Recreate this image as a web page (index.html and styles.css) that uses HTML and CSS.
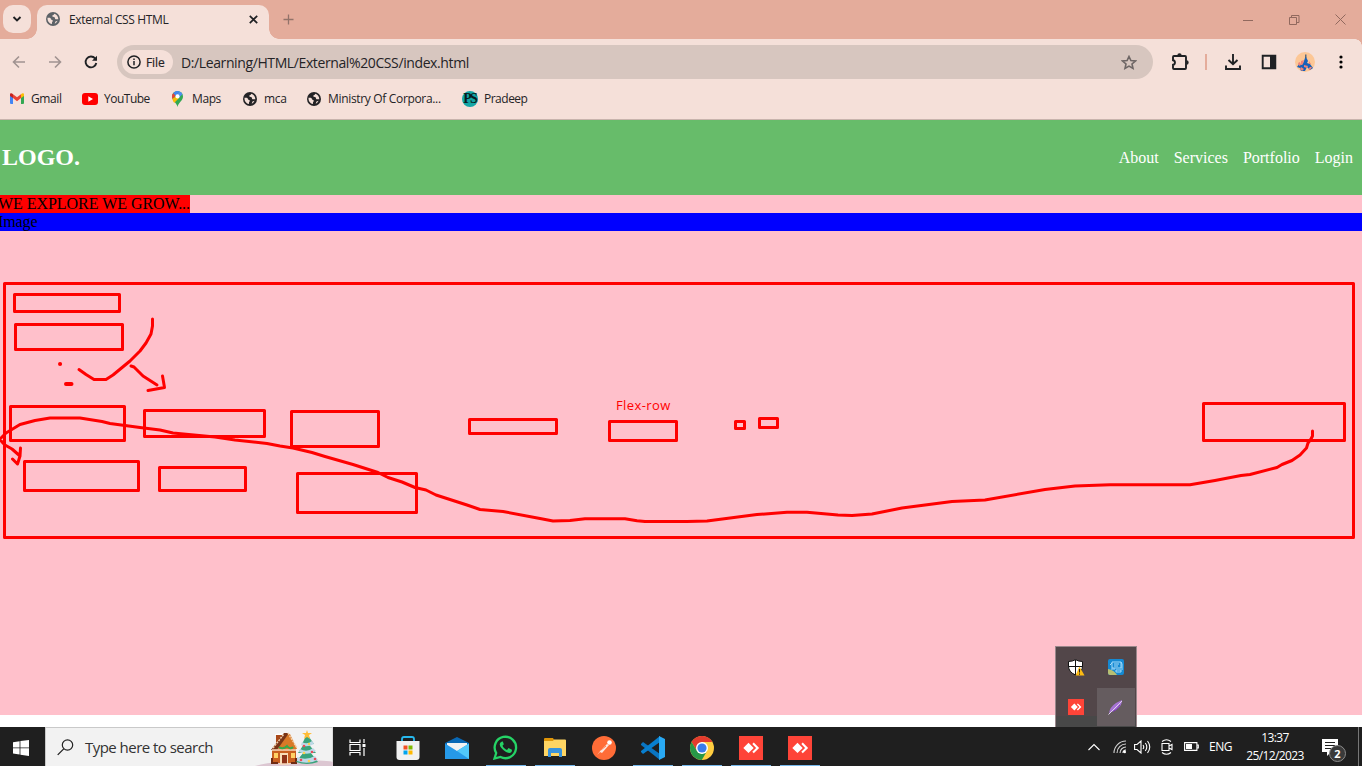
FILE: index.html
```html
<!DOCTYPE html>
<html lang="en">
<head>
<meta charset="utf-8">
<title>External CSS HTML</title>
<link rel="stylesheet" href="styles.css">
</head>
<body>
<svg class="defs" width="0" height="0">
  <symbol id="globe" viewBox="0 0 14 14"><circle cx="7" cy="7" r="7" fill="currentColor"/><path d="M1.500 5.800h2.200c1 0 1 .9 1.300 1.400.4.7 1.800.5 1.800 1.600 0 .8-.8 1-.8 1.700v1.600C3.400 11.700 1.300 9.400 1.500 5.800ZM8.300 1.800c-.2 1.300-1.700 1.100-2 2-.3.8.4 1.100 1.400 1.100 1.200 0 1.300.8 1.300 1.500 0 .9 1.500.8 2.200.8h1.100c0-2.700-1.600-4.700-4-5.400ZM11.600 8.800c-1 1.600-1.700 2.400-2.900 3l.5-1.600c.3-.8 1.200-1.300 2.400-1.400Z" fill="#f5e0d9"/></symbol>
  <symbol id="anydesk" viewBox="0 0 24 24"><path d="M0 0h24v24H0z" fill="#fe4438"/><path d="m9.500 6.700 5.200 5.200-5.200 5.200-5.200-5.200zM13.300 8l1.500-1.400 5.300 5.300-5.300 5.300-1.500-1.500 3.800-3.800z" fill="#fff"/></symbol>
</svg>

<header class="tabstrip">
  <div class="tab-search"><svg width="10" height="8" viewBox="0 0 10 8"><path d="m1.500 2 3.500 3.500L8.500 2" class="ink thick"/></svg></div>
  <div class="tab">
    <svg class="tab-icon" width="14" height="14"><use href="#globe"/></svg>
    <span class="tab-title">External CSS HTML</span>
    <svg class="tab-close" width="8" height="8" viewBox="0 0 8 8"><path d="m.7.7 6.600 6.600m0-6.600L.7 7.300" class="ink"/></svg>
  </div>
  <svg class="new-tab" width="11" height="11" viewBox="0 0 11 11"><path d="M5.500.5v10M.5 5.500h10" stroke="#92736a" stroke-width="1.300"/></svg>
  <div class="window-buttons">
    <svg width="10" height="11"><path d="M0 6.500h10"/></svg>
    <svg width="11" height="11"><path d="M.5 3.500h7v7h-7zM2.500 3.500v-2h7.500v7H8"/></svg>
    <svg width="11" height="11"><path d="m.5.5 10 10m0-10-10 10"/></svg>
  </div>
</header>

<div class="toolbar">
  <svg class="back" width="14" height="14" viewBox="0 0 14 14"><path d="M13 7H1.500M7 1.500 1.500 7 7 12.500" class="dim"/></svg>
  <svg class="forward" width="14" height="14" viewBox="0 0 14 14"><path d="M1 7h11.500M7 1.500 12.500 7 7 12.500" class="dim"/></svg>
  <svg class="reload" width="14" height="14" viewBox="0 0 14 14"><path d="M12.300 8a5.400 5.400 0 1 1-1.200-4.600L12.500 4.800" class="ink thick"/><path d="M13 .8v5H8z" fill="#1f2124"/></svg>
  <div class="omnibox">
    <div class="file-chip"><svg width="14" height="14" viewBox="0 0 14 14"><circle cx="7" cy="7" r="6.100" class="ink"/><path d="M7 6v4.300M7 3.500v1.600" class="ink"/></svg><span>File</span></div>
    <span class="url">D:/Learning/HTML/External%20CSS/index.html</span>
    <svg class="star" width="16" height="15" viewBox="0 0 16 15"><path d="m8 1.500 1.900 4.100 4.500.4-3.400 3 1 4.400L8 11.100l-4 2.300 1-4.400L1.600 6l4.500-.4z"/></svg>
  </div>
  <div class="actions">
    <svg width="18" height="18" viewBox="0 0 18 18"><path d="M3 3h11q1 0 1 1v11q0 1-1 1H3q-1 0-1-1v-3.200c2.600-.3 2.600-4.300 0-4.600V4q0-1 1-1Z" class="ink thick"/><path d="M6.300 2.500a2.200 2.200 0 0 1 4.400 0zM15.500 7.300a2.200 2.200 0 0 1 0 4.400z" fill="#1f2124"/></svg>
    <i class="divider"></i>
    <svg width="16" height="16" viewBox="0 0 16 16"><path d="M8 0v10M3.500 6 8 10.300 12.500 6M1 11.500V15h14v-3.500" class="ink thick"/></svg>
    <svg width="16" height="16" viewBox="0 0 16 16"><path d="M1.700 1.700h12.600v12.600H1.700z" class="ink thick"/><path d="M9 1h6v14H9z" fill="#1f2124"/></svg>
    <svg width="20" height="20" viewBox="0 0 20 20"><circle cx="10" cy="10" r="10" fill="#fcc796"/><path d="m11 5 2 4-1 2 3 1 3 4-3 2-3-3-2 4H6l-1-3-3-1 2-3 3 1 2-4 1-3z" fill="#1760ba"/><path d="m6 9 3-1-1 4-2 1zm3 4 4 1-1 2-3-1zM3 11l2-1 1 3-2 1zm11-2 2 3h-2zM6 15l3 2-2 2-2-2zm9 0h2l-2 3-2-1z" fill="#f18178"/><path d="M10.800 2.500V6" stroke="#325374" stroke-width="1.200"/></svg>
    <svg width="4" height="16"><circle cx="2" cy="3" r="1.600"/><circle cx="2" cy="8" r="1.600"/><circle cx="2" cy="13" r="1.600"/></svg>
  </div>
</div>

<nav class="bookmarks">
  <a class="bm gmail"><svg width="14" height="11" viewBox="0 0 14 11"><path d="M0 1.500 3 3.800V11H1q-1 0-1-1z" fill="#4285f4"/><path d="M11 3.800 14 1.500V10q0 1-1 1h-2z" fill="#34a853"/><path d="M3 1.200 7 4.300l4-3.100v3.900L7 8.200 3 5.100z" fill="#ea4335"/><path d="M0 1.500C0 0 1.700-.2 3 1.200v3.900L0 2.900z" fill="#c5221f"/><path d="M11 1.200c1.300-1.400 3-1.200 3 .3v1.400l-3 2.200z" fill="#fbbc04"/></svg><span>Gmail</span></a>
  <a class="bm youtube"><svg width="16" height="12"><rect width="16" height="12" rx="3" fill="#f00"/><path d="m6.300 3.300 4.700 2.700-4.700 2.700z" fill="#fff"/></svg><span>YouTube</span></a>
  <a class="bm maps"><svg width="11" height="16" viewBox="0 0 11 16"><path d="M5.500 0A5.500 5.500 0 0 1 11 5.500C11 10 6.500 11 5.500 16 4.500 11 0 10 0 5.500A5.500 5.500 0 0 1 5.500 0" fill="#34a853"/><path d="M1.200 2.200A5.500 5.500 0 0 1 7.500.4L3.600 5z" fill="#4285f4"/><path d="M1.200 2.200 3.600 4.700.4 8Q-.8 4.600 1.200 2.200" fill="#ea4335"/><path d="M.4 7.800 8 3l-1 4-4.800 5Q.8 10.500.4 7.800" fill="#fbbc04"/><path d="M7.500.4Q9.700 1 10.500 3.300L7 6.500 4 4.300z" fill="#4d90ee"/><circle cx="5.500" cy="5.400" r="2.100" fill="#fff"/></svg><span>Maps</span></a>
  <a class="bm mca"><svg width="14" height="14"><use href="#globe"/></svg><span>mca</span></a>
  <a class="bm ministry"><svg width="14" height="14"><use href="#globe"/></svg><span>Ministry Of Corpora...</span></a>
  <a class="bm pradeep"><b class="ps">PS</b><span>Pradeep</span></a>
</nav>

<main class="page">
  <div class="site-header">
    <strong class="logo">LOGO.</strong>
    <nav class="site-nav"><a>About</a><a>Services</a><a>Portfolio</a><a>Login</a></nav>
  </div>
  <div class="slogan">WE EXPLORE WE GROW...</div>
  <div class="image-row">Image</div>

  <svg class="ink-layer" width="1362" height="320" viewBox="0 230 1362 320">
    <g class="marks">
      <rect x="4.500" y="283.500" width="1349" height="254"/>
      <rect x="14.500" y="294.500" width="105" height="17"/>
      <rect x="15.500" y="324.500" width="107" height="25"/>
      <rect x="10.500" y="406.500" width="114" height="34"/>
      <rect x="144.500" y="410.500" width="120" height="26"/>
      <rect x="291.500" y="411.500" width="87" height="35"/>
      <rect x="469.500" y="419.500" width="87" height="14"/>
      <rect x="609.500" y="421.500" width="67" height="19"/>
      <rect x="735.500" y="421.500" width="9" height="7"/>
      <rect x="759.500" y="418.500" width="18" height="9"/>
      <rect x="1203.500" y="403.500" width="141" height="37"/>
      <rect x="24.500" y="461.500" width="114" height="29"/>
      <rect x="159.500" y="467.500" width="86" height="23"/>
      <rect x="297.500" y="473.500" width="119" height="39"/>
      <path d="M152.500 319v7l-1.500 8-5 9-6 8-10 10-17 14-7 4.500H94l-8-5-7-5M131 366l3 1 9 9 14 9M162.500 376l2 11.500-16.500 3"/>
      <path class="dot" d="M60 364h.1M66 384h5.500"/>
      <path d="M1312.500 431v5l-1.500 3-3 4-1.500 5-6.500 7-8 5.500-10 4-5 3-27 7-9 1-26 5-25 4.300h-80l-35 1.200-30 3.500-60 10.500-33 1.500-50 6.500-30 6-20 1.500-14-.5-31-2.700h-20l-30 2.200-50 6.500-20 .6h-42l-8-.8-12-2H585l-15 1.700-17 .5-13-2.500-37-7-23-2-13-4.500-31-10-10-5-11-2.500-13-5.500-14-4.500-10-5-25-8-28-8-13-4-19-4.500-13-2-13-2.500-32-3.500-20-3-42-4-13-3-20-2.500-30-4-8-2-22-3.500H50l-15 2.500-15 4L6 433l-6 6 2 3 3 3 7 4 8 7M20.500 448l-.5 8-2.500 8-5-5"/>
    </g>
  </svg>
  <span class="flex-label">Flex-row</span>
</main>
<div class="page-end"></div>

<footer class="taskbar">
  <div class="start"><svg width="16" height="16" viewBox="0 0 16 16"><path d="m0 2.200 6.600-1v6.200H0zM7.400 1.100 16 0v7.400H7.400zM0 8.200h6.600v6.300l-6.600-.9zM7.400 8.200H16V16l-8.600-1.300z" fill="#fff"/></svg></div>
  <div class="search">
    <svg width="17" height="17" viewBox="0 0 17 17"><circle cx="10.500" cy="6" r="5.200" fill="none" stroke="#222" stroke-width="1.200"/><path d="m6.700 9.900-6 6" stroke="#222" stroke-width="1.300"/></svg>
    <span class="search-text">Type here to search</span>
    <svg class="holiday" width="80" height="38" viewBox="0 0 80 38">
      <path d="M1 38q17-5 43-4 24-3 35 0v4z" fill="#dcc7d2"/>
      <path d="M22 7h6v8h-6z" fill="#a94818"/><path d="m21 6 8-1v2h-8z" fill="#fff"/>
      <path d="M18 21h24v14H18z" fill="#c95f20"/><path d="M30 6h6l7 15H24z" fill="#d87927"/>
      <path d="M30 5h5L23 22h-6z" fill="#793416"/><path d="m19 20 11-14m4-1 9 15" stroke="#f3d0aa" stroke-width="1.500" stroke-dasharray="2 1" fill="none"/>
      <path d="M26 25h8v11h-8z" fill="#f8ddb7"/><path d="M28 27h5v9h-5z" fill="#8f3318"/><path d="M20 25h4v5h-4zm17 0h4v5h-4z" fill="#ffd266"/><path d="M18 22h24M25 36h11" stroke="#f8d9bc" stroke-width="1.500"/><path d="M25 19q4 3 8-1 3 4 6 1" stroke="#36a849" stroke-width="2" fill="none"/>
      <path d="M18 30v5h6M42 30v5h-5" stroke="#702b12" stroke-width="2" fill="none"/>
      <path d="m53 6 7 10H48zM52 13l10 12H44zM53 20l11 14q-11 4-22 0z" fill="#3aa37c"/><path d="M48 14q5 3 10-1l2 3q-7 4-13 1zM46 21q7 4 13-1l3 3q-8 5-17 1zM43 29q9 4 18-1l3 4q-10 5-21 1z" fill="#bed8e8"/><path d="m53 2 1 3h4l-3 2 1 4-3-2-3 2 1-4-3-2h4z" fill="#ffbd36"/>
      <g fill="#ea4b59"><circle cx="50" cy="18" r="1.300"/><circle cx="58" cy="24" r="1.300"/><circle cx="47" cy="32" r="1.300"/><circle cx="61" cy="31" r="1.300"/></g><g fill="#ffd24e"><circle cx="55" cy="16" r="1.200"/><circle cx="50" cy="25" r="1.300"/><circle cx="55" cy="33" r="1.300"/></g>
    </svg>
  </div>
  <div class="apps">
    <div class="app"><svg width="17" height="17" viewBox="0 0 17 17" fill="none" stroke="#fff" stroke-width="1.200"><path d="M1 .5v3h10v-3M1 16.500v-3h10v3M1 5.500h10v6H1zM15 0v4M15 9v8"/><path d="M13.500 5h3v3h-3z" fill="#fff" stroke="none"/></svg></div>
    <div class="app"><svg width="24" height="24" viewBox="0 0 24 24"><path d="M6 6V3q0-2 2-2h8q2 0 2 2v3" fill="none" stroke="#27b8ed" stroke-width="1.800"/><path d="M.5 5h23v16q0 3-3 3h-17q-3 0-3-3z" fill="#f1f1f1"/><path d="M7.500 9.500h4v4h-4z" fill="#f25022"/><path d="M12.500 9.500h4v4h-4z" fill="#7fba00"/><path d="M7.500 14.500h4v4h-4z" fill="#00a4ef"/><path d="M12.500 14.500h4v4h-4z" fill="#ffb900"/></svg></div>
    <div class="app"><svg width="24" height="24" viewBox="0 0 24 24"><path d="M0 7 12 1l12 6v6H0z" fill="#0968b5"/><path d="M2 7h20v9H2z" fill="#f2f2f2"/><path d="M0 7.500 12 15 24 7.500V23H0z" fill="#2699e8"/><path d="M24 7.500V23L12 15z" fill="#51c8fa"/></svg></div>
    <div class="app open"><svg width="26" height="25" viewBox="0 0 26 25"><path d="M1.500 23.500 3.200 18A10.700 10.700 0 1 1 7.500 22z" fill="none" stroke="#25d366" stroke-width="2.300"/><path d="M9 6.500c-5 2.500-.5 7 2 9 3 2.500 8 4.200 8-.8l-3.500-1.600-1.500 1.800c-2-.8-3.500-2.200-4.500-4.200l1.300-1.500-1-2.700z" fill="#25d366"/></svg></div>
    <div class="app open"><svg width="22" height="20" viewBox="0 0 22 20"><path d="M0 2.500V1q0-1 1-1h8l1.500 2.500H22v15H0z" fill="#df9508"/><path d="M0 3h9l1-1.500h11q1 0 1 1V18H0z" fill="#ffd563"/><path d="M4 19v-7q0-2 2-2h10q2 0 2 2v7h-3v-4H7v4z" fill="#3993dc"/></svg></div>
    <div class="app"><svg width="24" height="24" viewBox="0 0 24 24"><circle cx="12" cy="12" r="12" fill="#ff6c37"/><circle cx="17.500" cy="6.500" r="2.300" fill="#fff"/><path d="m5 19 4-5 6-6 2 1-7 8-2-1z" fill="#fbe9e2"/><path d="m9 14 5-4" stroke="#ff7e51"/></svg></div>
    <div class="app open"><svg width="24" height="24" viewBox="0 0 24 24"><path d="m0 8 2-2L19 18v6L0 9z" fill="#0a75c1"/><path d="m0 16 2 2L19 6V0L0 15z" fill="#087fcf"/><path d="m18 0 6 3v18l-6 3z" fill="#29a9f3"/></svg></div>
    <div class="app open"><svg width="24" height="24" viewBox="0 0 24 24"><circle cx="12" cy="12" r="12" fill="#ffcd40"/><path d="M1.600 6a12 12 0 0 1 20.800 0H12L7 15z" fill="#e33b2e"/><path d="M1.600 6 7 15l5 3 5-3-5.200 9A12 12 0 0 1 1.600 6" fill="#279847"/><circle cx="12" cy="12" r="6" fill="#fff"/><circle cx="12" cy="12" r="4.600" fill="#3a7cec"/></svg></div>
    <div class="app open"><svg width="24" height="24"><use href="#anydesk"/></svg></div>
    <div class="app open"><svg width="24" height="24"><use href="#anydesk"/></svg></div>
  </div>
  <div class="tray">
    <svg width="12" height="8" viewBox="0 0 12 8"><path d="M.5 7 6 1.500 11.500 7"/></svg>
    <svg class="wifi" width="14" height="14" viewBox="0 0 14 14"><path d="M1 13A12 12 0 0 1 13 1M4 13A9 9 0 0 1 13 4M7 13A6 6 0 0 1 13 7" opacity=".8"/><path d="M10 13q0-3 3-3"/><circle cx="11.800" cy="12" r="1.200"/></svg>
    <svg class="volume" width="17" height="14" viewBox="0 0 17 14"><path d="M.6 4.500H3l4-3.500v12L3 9.500H.6zM9 5q1.500 2 0 4M11.300 3q3 4 0 8M13.500 1q4.500 6 0 12"/></svg>
    <svg class="camera" width="12" height="16" viewBox="0 0 12 16"><path d="M1 4.500h7v7H1zM8 7l3-1.500v5L8 9M1 2.500q4.500-3.500 9 0M1 13.500q4.500 3.500 9 0"/></svg>
    <svg class="battery" width="15" height="9" viewBox="0 0 15 9"><path d="M.6.6h12.300v7.800H.6zM13 3h1.300v3H13"/><path d="M2 2h6v5H2z"/></svg>
    <span class="lang">ENG</span>
    <div class="clock"><span class="time">13:37</span><span class="date">25/12/2023</span></div>
    <div class="notifications"><svg width="16" height="17" viewBox="0 0 16 17"><path d="M0 0h16v13H9l-4 4v-4H0z"/><path d="M3 3.500h10M3 6.500h10M3 9.500h7"/></svg><b>2</b></div>
  </div>
</footer>

<aside class="tray-popup">
  <div><svg width="17" height="17" viewBox="0 0 17 17"><path d="M7.500.6Q10 2.400 14.500 2.500V7q0 6-7 9-7-3-7-9V2.500Q5 2.400 7.500.6" fill="#fff" stroke="#111"/><path d="M7.500 1v15M1 7.500h13" stroke="#111"/><path d="m11.500 7.500 5 9h-9z" fill="#fdbb13"/><path d="M11.500 10v3.500m0 1v1.200" stroke="#222"/></svg></div>
  <div><svg width="16" height="16" viewBox="0 0 16 16"><rect width="16" height="16" rx="2" fill="#1589d2"/><path d="M0 10q6 1 9 6H2q-2 0-2-2z" fill="#b7bf72"/><path d="M4 3h9v6H4zM6 5h5M6 7h4M8 11h5v2H8zM2 6l2-2M3 10h4M13 3l1 2v6" stroke="#a5dcfa" fill="none"/></svg></div>
  <div><svg width="16" height="16"><use href="#anydesk"/></svg></div>
  <div class="active"><svg width="16" height="16" viewBox="0 0 16 16"><path d="M1 14Q2 8 8 4l6-3q0 6-6 10z" fill="#a673d3"/><path d="M.5 15.500 14 2" stroke="#ded0ed"/><path d="m5 12.500 4-2.500 3-4" stroke="#793dad" fill="none"/></svg></div>
</aside>
</body>
</html>
```

FILE: styles.css
```css
* { box-sizing: border-box; }
body {
  margin: 0;
  width: 1362px;
  height: 766px;
  overflow: hidden;
  position: relative;
  display: flex;
  flex-direction: column;
  background: #fff;
  font-family: "Open Sans", "Noto Sans", sans-serif;
  font-size: 12px;
  color: #242326;
}
svg { display: block; flex: none; }
span { white-space: nowrap; }
.defs { position: absolute; }
.ink { fill: none; stroke: #1f2124; stroke-width: 1.5; }
.thick { stroke-width: 1.9; }
.dim { fill: none; stroke: #a09391; stroke-width: 1.6; }

/* Browser tab strip */
.tabstrip { height: 39px; flex: none; display: flex; align-items: center; padding-left: 3px; background: #e4ac9b; }
.tab-search { width: 28px; height: 28px; margin: 0 6px 1px 0; border-radius: 10px; background: #f5e0d9; display: grid; place-items: center; }
.tab { position: relative; align-self: flex-end; width: 232px; height: 34px; border-radius: 10px 10px 0 0; background: #f5e0d9; display: flex; align-items: center; padding: 0 11px 6px 9px; }
.tab::before, .tab::after { content: ""; position: absolute; bottom: 0; width: 10px; height: 10px; }
.tab::before { left: -10px; background: radial-gradient(circle at 0 0, transparent 9.5px, #f5e0d9 10px); }
.tab::after { right: -10px; background: radial-gradient(circle at 100% 0, transparent 9.5px, #f5e0d9 10px); }
.tab-icon { color: #5d6267; }
.tab-title { margin-left: 9px; letter-spacing: -.35px; }
.tab-close { margin-left: auto; width: 9px; height: 9px; }
.new-tab { margin-left: 14px; margin-bottom: 1px; }
.window-buttons { margin-left: auto; display: flex; gap: 35.5px; padding: 0 16px 1px 0; }
.window-buttons path { fill: none; stroke: #91695e; stroke-width: 1; }

/* Address bar */
.toolbar { height: 46px; flex: none; display: flex; align-items: center; background: #f5e0d9; border-top-right-radius: 7px; box-shadow: 8px -7px 0 #e4ac9b; clip-path: inset(0); }
.toolbar { box-shadow: none; background: radial-gradient(circle at 0 100%, #f5e0d9 6.5px, #e4ac9b 7px) right top / 7px 7px no-repeat, #f5e0d9; border-radius: 0; }
.back { margin-left: 12px; }
.forward { margin-left: 22px; }
.reload { margin-left: 22px; }
.omnibox { width: 1036px; height: 34px; margin-left: 19px; padding: 0 16px 0 5px; border-radius: 17px; background: #d7c6bf; display: flex; align-items: center; }
.file-chip { width: 51px; height: 24px; border-radius: 12px; background: #f5e0d9; display: flex; align-items: center; padding-left: 5px; gap: 5px; letter-spacing: -.1px; -webkit-text-stroke: .2px #242326; }
.url { margin-left: 8px; font-size: 14px; letter-spacing: -.39px; }
.star { margin-left: auto; }
.star path { fill: none; stroke: #6e6665; stroke-width: 1.6; }
.actions { display: flex; align-items: center; padding-left: 18px; }
.actions > :nth-child(2) { margin-left: 16px; }
.actions > :nth-child(3) { margin-left: 18px; }
.actions > :nth-child(4) { margin-left: 20px; }
.actions > :nth-child(5) { margin-left: 18px; }
.actions > :nth-child(6) { margin-left: 24px; }
.divider { width: 2px; height: 16px; background: #e4ac9b; }

/* Bookmarks */
.bookmarks { height: 35px; flex: none; display: flex; align-items: center; padding: 0 0 7px 10px; background: #f5e0d9; border-bottom: 1px solid #c8b4ad; }
.bm { display: flex; align-items: center; letter-spacing: -.3px; flex: none; }
.bm span { margin-left: 7px; }
.gmail { width: 72px; letter-spacing: -.4px; }
.youtube { width: 90px; letter-spacing: -.5px; }
.youtube span { margin-left: 6px; }
.maps { width: 71px; letter-spacing: -.4px; }
.maps span { margin-left: 9px; }
.mca { width: 64px; }
.ministry { width: 155px; letter-spacing: -.33px; }
.pradeep { letter-spacing: -.5px; }
.pradeep span { margin-left: 6px; }
.ps { width: 16px; height: 16px; border-radius: 50%; background: #13a6a6; color: #081c20; font: bold 14px/16px "Liberation Serif", serif; letter-spacing: -2px; text-indent: -1px; text-align: center; }

/* Web page */
.page { position: relative; height: 595px; flex: none; background: #ffc0cb; color: #000; font: 16px/18px "Liberation Serif", "Times New Roman", serif; overflow: hidden; }
.site-header { height: 75px; background: #67bc6a; color: #fff; display: flex; align-items: center; justify-content: space-between; padding: 0 9px 0 2px; }
.logo { font-size: 24px; padding-bottom: 2px; }
.site-nav { display: flex; gap: 15px; padding-top: 1px; }
.slogan { width: 190px; height: 18px; background: #f00; white-space: nowrap; text-indent: -2px; letter-spacing: -.04px; }
.image-row { height: 18px; background: #00f; text-indent: -2px; letter-spacing: -.1px; }
.ink-layer { position: absolute; left: 0; top: 110px; }
.marks { fill: none; stroke: #f00; stroke-width: 3; stroke-linejoin: round; stroke-linecap: round; }
.marks .dot { stroke-width: 4; }
.flex-label { position: absolute; left: 616px; top: 276px; color: #f00; font: 13px/18px "Open Sans", sans-serif; letter-spacing: .4px; }
.page-end { height: 12px; flex: none; background: #fff; }

/* Taskbar */
.taskbar { height: 39px; flex: none; display: flex; background: #1f1f1f; color: #fff; }
.start { width: 45px; display: grid; place-items: center; padding: 2px 4px 0 0; }
.search { width: 288px; display: flex; align-items: center; padding-left: 11px; background: #f2f2f2; border: 1px solid #c9c9c9; border-right-color: #ddd; border-bottom: 0; }
.search-text { margin-left: 11px; color: #333; font-size: 15px; letter-spacing: -.53px; }
.holiday { margin-left: auto; position: relative; left: 2px; }
.apps { display: flex; margin-left: 1px; }
.app { width: 49px; height: 39px; display: grid; place-items: center; padding-top: 2px; }
.app:first-child { padding-right: 2px; }
.open { background: linear-gradient(#76b9ed, #76b9ed) center bottom / 40px 1px no-repeat; }
.tray { margin-left: auto; display: flex; align-items: center; padding-right: 6px; border-right: 1px solid #777; margin-right: 3px; }
.tray path { fill: none; stroke: #fff; stroke-width: 1.1; }
.tray .wifi circle, .tray .battery path:nth-child(2), .tray .notifications path:first-child { fill: #fff; stroke: none; }
.tray .notifications path:last-child { stroke: #202020; }
.wifi { margin-left: 13px; }
.volume { margin-left: 7px; }
.camera { margin-left: 10px; }
.battery { margin-left: 11px; }
.lang { width: 23px; margin-left: 10px; letter-spacing: -.5px; }
.clock { width: 60px; margin-left: 13px; text-align: center; line-height: 18px; letter-spacing: -.6px; display: flex; flex-direction: column; padding-top: 1px; }
.notifications { position: relative; width: 30px; height: 39px; margin-left: 17px; padding-top: 12px; }
.notifications b { position: absolute; left: 7px; top: 18px; width: 17px; height: 17px; border: 1px solid #8b8b8b; border-radius: 50%; background: #3a3a3a; text-align: center; font-size: 11px; line-height: 15px; }

/* Hidden icon flyout */
.tray-popup { position: absolute; left: 1055px; top: 646px; width: 82px; height: 81px; display: grid; grid-template: 40px 40px / 40px 40px; background: linear-gradient(#524649 0 69px, #484848 69px); border: solid #9a878b; border-width: 1px 1px 0; }
.tray-popup div { display: grid; place-items: center; }
.tray-popup .active { background: #655c5f; width: 38px; height: 38px; place-self: center; }
```
